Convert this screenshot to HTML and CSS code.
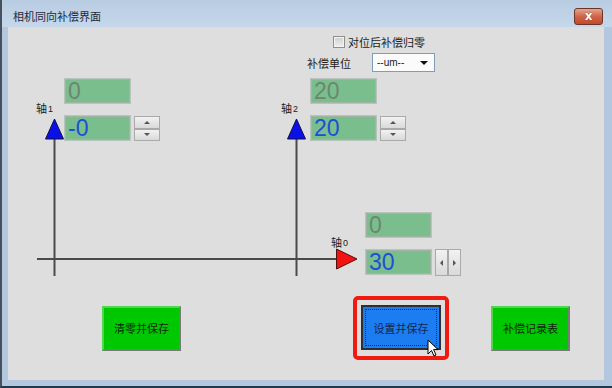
FILE: index.html
```html
<!DOCTYPE html>
<html>
    <head>
        <title>相机同向补偿界面</title>
        <meta charset="UTF-8">
        <link rel="stylesheet" href="styles.css">
    </head>
    <body>
        <div class="window">
            <div class="titlebar">
                <span class="title">相机同向补偿界面</span>
                <span class="close">x</span>
            </div>
            <div class="client">
                <!-- 上方选项 -->
                <div class="opts">
                    <label class="opt-check"><span class="chk"></span>对位后补偿归零</label>
                    <div class="opt-unit">
                        <span>补偿单位</span>
                        <div class="select"><span>--um--</span><i class="caret"></i></div>
                    </div>
                </div>

                <!-- 坐标轴 -->
                <svg class="axes" width="596" height="353">
                    <path d="M29 232 H330" stroke="#4a4a4a" stroke-width="2" fill="none"/>
                    <path d="M46.5 110 V249" stroke="#4a4a4a" stroke-width="2" fill="none"/>
                    <path d="M288.5 110 V249" stroke="#4a4a4a" stroke-width="2" fill="none"/>
                    <polygon points="37.5,112 55.5,112 46.5,92" fill="#0a10e8" stroke="#101040" stroke-width="1"/>
                    <polygon points="279.5,112 297.5,112 288.5,92" fill="#0a10e8" stroke="#101040" stroke-width="1"/>
                    <polygon points="328.5,222 328.5,242 349,232" fill="#f21212" stroke="#501010" stroke-width="1"/>
                </svg>

                <span class="axis-name ax1-name">轴<sub>1</sub></span>
                <div class="field ax1-set">0</div>
                <div class="field ax1-val">-0</div>
                <div class="spin ax1-spin"><b class="up"></b><b class="down"></b></div>

                <span class="axis-name ax2-name">轴<sub>2</sub></span>
                <div class="field ax2-set">20</div>
                <div class="field ax2-val">20</div>
                <div class="spin ax2-spin"><b class="up"></b><b class="down"></b></div>

                <span class="axis-name ax0-name">轴<sub>0</sub></span>
                <div class="field ax0-set">0</div>
                <div class="field ax0-val">30</div>
                <div class="spin spin-h ax0-spin"><b class="left"></b><b class="right"></b></div>

                <!-- 底部按钮 -->
                <div class="actions">
                    <button class="btn btn-green">清零并保存</button>
                    <div class="focus-ring">
                        <button class="btn btn-blue"><span>设置并保存</span></button>
                    </div>
                    <button class="btn btn-green">补偿记录表</button>
                </div>

                <svg class="cursor" width="14" height="20" viewBox="0 0 14 20">
                    <path d="M1 1 L1 15 L4.5 11.5 L7 17 L9 16 L6.6 10.6 L11 10.6 Z" fill="#fff" stroke="#000" stroke-width="1"/>
                </svg>
            </div>
        </div>
    </body>
</html>
```

FILE: styles.css
```css
* {
    margin: 0;
    padding: 0;
    box-sizing: border-box;
}

body {
    font-family: "Noto Sans CJK SC", "Liberation Sans", sans-serif;
    font-size: 11px;
    color: #1b1b1b;
}

.window {
    width: 612px;
    height: 388px;
    background: #b3c8df;
    border-left: 2px solid #45525e;
    border-bottom: 2px solid #1d3b4d;
    display: flex;
    flex-direction: column;
}

.titlebar {
    height: 27px;
    padding: 5px 9px 0 11px;
    display: flex;
    align-items: center;
    background: linear-gradient(#b8cce2, #c6d7ea);
}

.title {
    color: #1d2b3a;
    font-size: 11px;
}

.close {
    margin-left: auto;
    width: 29px;
    height: 17px;
    border: 1px solid #6d3526;
    border-radius: 3px;
    background: linear-gradient(#e3a590, #cf6448 50%, #c04a2e);
    color: #fff;
    font: bold 12px/14px "DejaVu Sans", sans-serif;
    text-align: center;
    text-shadow: 0 0 1px #5a2010;
}

.client {
    position: relative;
    margin-left: 6px;
    width: 596px;
    height: 353px;
    background: #dedede;
    display: flex;
    flex-direction: column;
}

/* 选项 */
.opts {
    padding-top: 8px;
}

.opt-check {
    margin-left: 325px;
    display: flex;
    align-items: center;
    gap: 3px;
    height: 14px;
}

.chk {
    width: 12px;
    height: 12px;
    border: 1px solid #8e8e8e;
    background: linear-gradient(#d0d0d0, #eeeeee);
    box-shadow: inset 0 0 0 1px #f4f4f4;
}

.opt-unit {
    margin: 4px 0 0 299px;
    display: flex;
    align-items: center;
    gap: 21px;
}

.select {
    width: 63px;
    height: 19px;
    border: 1px solid #7f9cc0;
    background: #fbfbfb;
    display: flex;
    align-items: center;
    padding: 0 6px 0 4px;
    font: 10px "Liberation Sans", sans-serif;
}

.caret {
    margin-left: auto;
    border-left: 4px solid transparent;
    border-right: 4px solid transparent;
    border-top: 4px solid #111;
}

/* 坐标轴画布 */
.axes {
    position: absolute;
    left: 0;
    top: 0;
}

.axis-name {
    position: absolute;
    font-size: 11px;
    line-height: 14px;
}

.axis-name sub {
    font: 9px "Liberation Sans", sans-serif;
    vertical-align: 1px;
    margin-left: 1px;
}

.ax1-name { left: 28px; top: 74px; }
.ax2-name { left: 273px; top: 74px; }
.ax0-name { left: 323px; top: 208px; }

.field {
    position: absolute;
    width: 67px;
    height: 26px;
    background: #7bbe8d;
    border: 1px solid #b9c2bc;
    box-shadow: inset 0 0 0 1px #9fb6a5;
    padding-left: 3px;
    font: 23px/24px "Liberation Sans", sans-serif;
    color: #6c8672;
}

.ax1-val, .ax2-val, .ax0-val {
    color: #1b4fd6;
}

.ax1-set { left: 56px; top: 51px; }
.ax1-val { left: 56px; top: 88px; }
.ax2-set { left: 302px; top: 51px; }
.ax2-val { left: 302px; top: 88px; }
.ax0-set { left: 357px; top: 185px; }
.ax0-val { left: 357px; top: 222px; }

.spin {
    position: absolute;
    width: 26px;
    height: 25px;
    display: flex;
    flex-direction: column;
}

.spin b {
    flex: 1;
    border: 1px solid #a9a9a9;
    background: linear-gradient(#f2f2f2, #d9d9d9);
    display: flex;
    align-items: center;
    justify-content: center;
}

.spin b::after {
    content: "";
    border: 3px solid transparent;
}

.spin .up::after {
    border-bottom-color: #555;
    border-top-width: 0;
}

.spin .down::after {
    border-top-color: #555;
    border-bottom-width: 0;
}

.spin-h {
    height: 27px;
    flex-direction: row;
}

.spin .left::after {
    border-right-color: #555;
    border-left-width: 0;
}

.spin .right::after {
    border-left-color: #555;
    border-right-width: 0;
}

.ax1-spin { left: 126px; top: 89px; }
.ax2-spin { left: 372px; top: 89px; }
.ax0-spin { left: 427px; top: 222px; }

/* 按钮 */
.actions {
    margin-top: auto;
    padding: 0 0 20px 94px;
    display: flex;
    align-items: center;
}

.btn {
    width: 79px;
    height: 45px;
    font-family: "Noto Sans CJK SC", sans-serif;
    font-size: 11px;
    color: #0f260f;
    cursor: pointer;
}

.btn-green {
    background: #00c800;
    border: 2px solid;
    border-color: #4fd84f #7a7a7a #7a7a7a #4fd84f;
}

.focus-ring {
    margin-left: 172px;
    border: 4px solid #f01a0e;
    border-radius: 5px;
    padding: 5px 4px 6px;
}

.btn-blue {
    width: 80px;
    display: block;
    background: #1c7df3;
    border: 2px solid #2f2f2f;
    padding: 2px;
    color: #14244a;
}

.btn-blue span {
    display: flex;
    align-items: center;
    justify-content: center;
    height: 100%;
    border: 1px dotted #0c2870;
}

.focus-ring + .btn {
    margin-left: 42px;
}

.cursor {
    position: absolute;
    left: 419px;
    top: 312px;
}
```
